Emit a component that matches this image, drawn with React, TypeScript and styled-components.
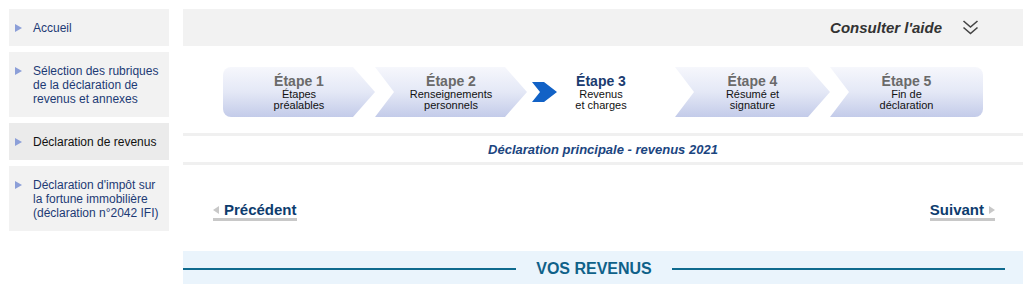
import React from 'react';
import styled, { createGlobalStyle, css } from 'styled-components';

const GlobalStyle = createGlobalStyle`
  html, body {
    margin: 0;
    padding: 0;
    background: #ffffff;
  }
  body {
    font-family: 'Liberation Sans', Arial, sans-serif;
    color: #222;
  }
`;

const Page = styled.div`
  display: flex;
  align-items: flex-start;
  gap: 14px;
  padding: 9px 8px 0 9px;
  width: 1031px;
  box-sizing: border-box;
  height: 284px;
  overflow: hidden;
`;

const Sidebar = styled.nav`
  width: 160px;
  flex-shrink: 0;
  display: flex;
  flex-direction: column;
  gap: 6px;
`;

const MenuItem = styled.a<{ $active?: boolean }>`
  display: flex;
  align-items: flex-start;
  gap: 11px;
  padding: 12px 8px 11px 6px;
  background: ${({ $active }) => ($active ? '#ebebeb' : '#f2f2f2')};
  color: ${({ $active }) => ($active ? '#111111' : '#1d3a75')};
  font-size: 12px;
  line-height: 14px;
  text-decoration: none;
  cursor: pointer;
`;

const Bullet = styled.span`
  flex-shrink: 0;
  width: 0;
  height: 0;
  margin-top: 3px;
  border-left: 7px solid #8c9fd8;
  border-top: 4px solid transparent;
  border-bottom: 4px solid transparent;
`;

const Main = styled.main`
  width: 840px;
  display: flex;
  flex-direction: column;
`;

const HelpBar = styled.div`
  height: 37px;
  background: #f2f2f2;
  display: flex;
  align-items: center;
  justify-content: flex-end;
  gap: 20px;
  padding-right: 44px;
`;

const HelpLink = styled.span`
  font-size: 15px;
  font-weight: bold;
  font-style: italic;
  color: #333333;
`;

const Steps = styled.ol`
  list-style: none;
  margin: 21px auto 0;
  padding: 0;
  display: grid;
  grid-template-columns: 152px 152px 148px 155px 153px;
`;

const Step = styled.li<{ $current?: boolean; $first?: boolean; $last?: boolean }>`
  position: relative;
  height: 50px;
  display: flex;
  flex-direction: column;
  align-items: center;
  justify-content: center;
  text-align: center;
  ${({ $current, $first, $last }) =>
    !$current &&
    css`
      background: linear-gradient(to bottom, #f6f7fc 0%, #e4e8f6 50%, #c3cbe9 100%);
      border-radius: ${$first ? '8px 0 0 8px' : $last ? '0 8px 8px 0' : '0'};
      clip-path: ${$first
        ? 'polygon(0 0, calc(100% - 22px) 0, 100% 50%, calc(100% - 22px) 100%, 0 100%)'
        : $last
        ? 'polygon(0 0, 100% 0, 100% 100%, 0 100%, 19px 50%)'
        : 'polygon(0 0, calc(100% - 22px) 0, 100% 50%, calc(100% - 22px) 100%, 0 100%, 19px 50%)'};
    `}
`;

const StepTitle = styled.span<{ $current?: boolean }>`
  font-size: 14px;
  font-weight: bold;
  line-height: 16px;
  color: ${({ $current }) => ($current ? '#1b3c70' : '#6a6a6a')};
`;

const StepLabel = styled.span`
  font-size: 11px;
  line-height: 11px;
  color: #111111;
`;

const CurrentMarker = styled.svg`
  position: absolute;
  left: 5px;
  top: 50%;
  transform: translateY(-50%);
`;

const SubTitleBar = styled.div`
  margin-top: 16px;
  border-top: 3px solid #f0f0f0;
  border-bottom: 3px solid #f0f0f0;
  height: 26px;
  display: flex;
  align-items: center;
  justify-content: center;
  font-size: 13px;
  font-weight: bold;
  font-style: italic;
  color: #1b4580;
`;

const NavRow = styled.div`
  margin-top: 36px;
  display: flex;
  justify-content: space-between;
  padding: 0 28px 0 30px;
`;

const NavLink = styled.a`
  display: flex;
  align-items: center;
  gap: 5px;
  font-size: 15px;
  font-weight: bold;
  line-height: 17px;
  color: #0d3c6e;
  border-bottom: 3px solid #c8c8c8;
  text-decoration: none;
  cursor: pointer;
`;

const NavArrow = styled.span<{ $dir: 'left' | 'right' }>`
  width: 0;
  height: 0;
  border-top: 4.5px solid transparent;
  border-bottom: 4.5px solid transparent;
  ${({ $dir }) =>
    $dir === 'left'
      ? css`border-right: 6px solid #c8c8c8;`
      : css`border-left: 6px solid #c8c8c8;`}
`;

const Section = styled.section`
  margin-top: 30px;
  background: #eaf4fc;
  padding: 9px 18px 10px 0;
`;

const SectionHeading = styled.div`
  display: flex;
  align-items: center;
  height: 18px;
`;

const HeadingLine = styled.span`
  flex: 1;
  height: 2px;
  background: #0f6a8e;
`;

const HeadingText = styled.h2`
  margin: 0;
  padding: 0 20px;
  font-size: 16px;
  font-weight: bold;
  line-height: 18px;
  color: #0f6189;
`;

const menu = [
  { label: 'Accueil' },
  { label: 'Sélection des rubriques de la déclaration de revenus et annexes' },
  { label: 'Déclaration de revenus', active: true },
  { label: "Déclaration d'impôt sur la fortune immobilière (déclaration n°2042 IFI)" },
];

const steps = [
  { title: 'Étape 1', lines: ['Étapes', 'préalables'] },
  { title: 'Étape 2', lines: ['Renseignements', 'personnels'] },
  { title: 'Étape 3', lines: ['Revenus', 'et charges'], current: true },
  { title: 'Étape 4', lines: ['Résumé et', 'signature'] },
  { title: 'Étape 5', lines: ['Fin de', 'déclaration'] },
];

const App: React.FC = () => {
  return (
    <>
      <GlobalStyle />
      <Page>
        <Sidebar>
          {menu.map((item) => (
            <MenuItem key={item.label} $active={item.active}>
              <Bullet />
              <span>{item.label}</span>
            </MenuItem>
          ))}
        </Sidebar>

        <Main>
          <HelpBar>
            <HelpLink>Consulter l'aide</HelpLink>
            <svg width="17" height="17" viewBox="0 0 17 17" fill="none" stroke="#444" strokeWidth="1.6">
              <path d="M1.5 2 L8.5 8 L15.5 2" />
              <path d="M1.5 8.5 L8.5 14.5 L15.5 8.5" />
            </svg>
          </HelpBar>

          <Steps>
            {steps.map((step, i) => (
              <Step
                key={step.title}
                $current={step.current}
                $first={i === 0}
                $last={i === steps.length - 1}
              >
                {step.current && (
                  <CurrentMarker width="25" height="20" viewBox="0 0 25 20">
                    <polygon points="0,0 12,0 25,10 12,20 0,20 8,10" fill="#1262c6" />
                  </CurrentMarker>
                )}
                <StepTitle $current={step.current}>{step.title}</StepTitle>
                {step.lines.map((line) => (
                  <StepLabel key={line}>{line}</StepLabel>
                ))}
              </Step>
            ))}
          </Steps>

          <SubTitleBar>Déclaration principale - revenus 2021</SubTitleBar>

          <NavRow>
            <NavLink>
              <NavArrow $dir="left" />
              Précédent
            </NavLink>
            <NavLink>
              Suivant
              <NavArrow $dir="right" />
            </NavLink>
          </NavRow>

          <Section>
            <SectionHeading>
              <HeadingLine />
              <HeadingText>VOS REVENUS</HeadingText>
              <HeadingLine />
            </SectionHeading>
          </Section>
        </Main>
      </Page>
    </>
  );
};

export default App;
